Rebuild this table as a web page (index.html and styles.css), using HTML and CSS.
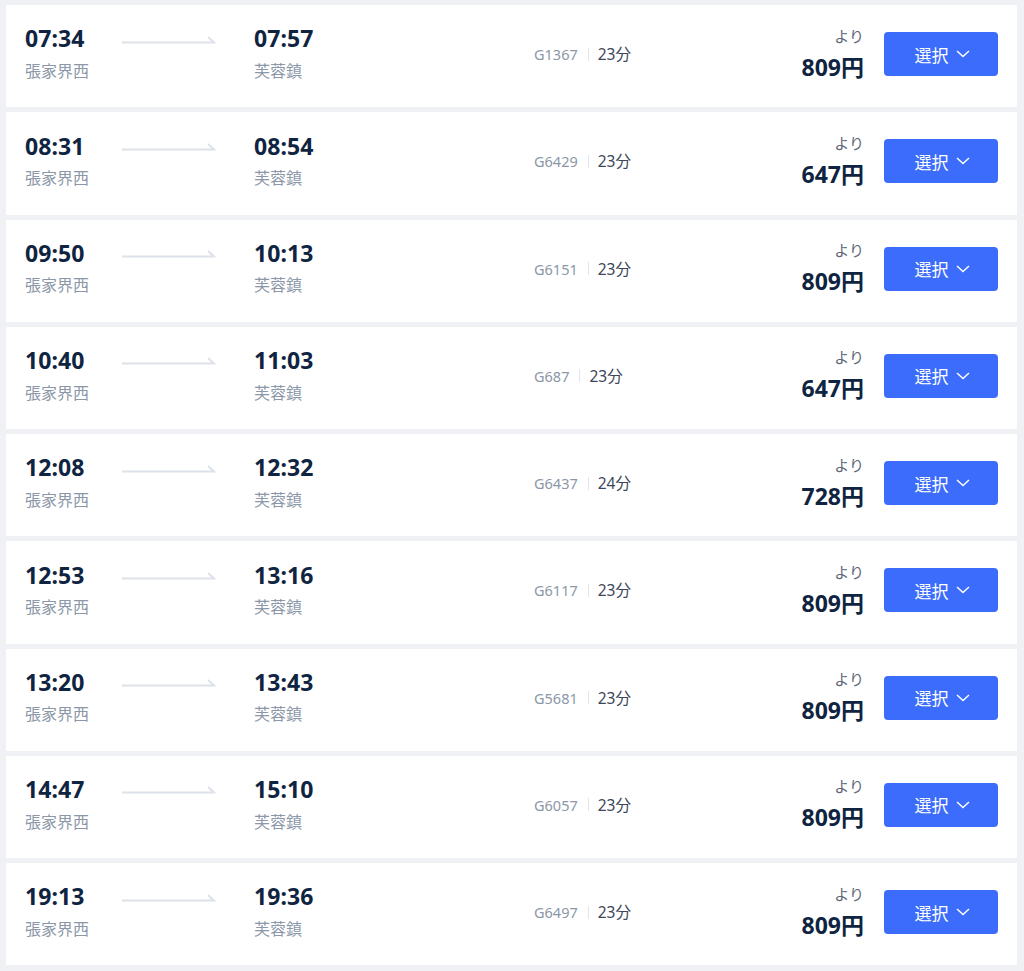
FILE: index.html
```html
<!DOCTYPE html>
<html lang="ja">
<head>
<meta charset="utf-8">
<link rel="stylesheet" href="styles.css">
</head>
<body>
<div class="list">
  <div class="card">
    <div class="stop"><div class="time">07:34</div><div class="station">張家界西</div></div>
    <svg class="arrow" width="94" height="8" viewBox="0 0 94 8"><path d="M0 6.5H92L86 1" fill="none" stroke="#dde2ea" stroke-width="2"/></svg>
    <div class="stop arr"><div class="time">07:57</div><div class="station">芙蓉鎮</div></div>
    <div class="train"><span class="no">G1367</span><span class="sep"></span><span class="dur">23分</span></div>
    <div class="price"><div class="from">より</div><div class="amount">809円</div></div>
    <button class="select">選択<svg width="14" height="8" viewBox="0 0 14 8"><path d="M1 1l6 5.5L13 1" fill="none" stroke="#fff" stroke-width="1.5"/></svg></button>
  </div>
  <div class="card">
    <div class="stop"><div class="time">08:31</div><div class="station">張家界西</div></div>
    <svg class="arrow" width="94" height="8" viewBox="0 0 94 8"><path d="M0 6.5H92L86 1" fill="none" stroke="#dde2ea" stroke-width="2"/></svg>
    <div class="stop arr"><div class="time">08:54</div><div class="station">芙蓉鎮</div></div>
    <div class="train"><span class="no">G6429</span><span class="sep"></span><span class="dur">23分</span></div>
    <div class="price"><div class="from">より</div><div class="amount">647円</div></div>
    <button class="select">選択<svg width="14" height="8" viewBox="0 0 14 8"><path d="M1 1l6 5.5L13 1" fill="none" stroke="#fff" stroke-width="1.5"/></svg></button>
  </div>
  <div class="card">
    <div class="stop"><div class="time">09:50</div><div class="station">張家界西</div></div>
    <svg class="arrow" width="94" height="8" viewBox="0 0 94 8"><path d="M0 6.5H92L86 1" fill="none" stroke="#dde2ea" stroke-width="2"/></svg>
    <div class="stop arr"><div class="time">10:13</div><div class="station">芙蓉鎮</div></div>
    <div class="train"><span class="no">G6151</span><span class="sep"></span><span class="dur">23分</span></div>
    <div class="price"><div class="from">より</div><div class="amount">809円</div></div>
    <button class="select">選択<svg width="14" height="8" viewBox="0 0 14 8"><path d="M1 1l6 5.5L13 1" fill="none" stroke="#fff" stroke-width="1.5"/></svg></button>
  </div>
  <div class="card">
    <div class="stop"><div class="time">10:40</div><div class="station">張家界西</div></div>
    <svg class="arrow" width="94" height="8" viewBox="0 0 94 8"><path d="M0 6.5H92L86 1" fill="none" stroke="#dde2ea" stroke-width="2"/></svg>
    <div class="stop arr"><div class="time">11:03</div><div class="station">芙蓉鎮</div></div>
    <div class="train"><span class="no">G687</span><span class="sep"></span><span class="dur">23分</span></div>
    <div class="price"><div class="from">より</div><div class="amount">647円</div></div>
    <button class="select">選択<svg width="14" height="8" viewBox="0 0 14 8"><path d="M1 1l6 5.5L13 1" fill="none" stroke="#fff" stroke-width="1.5"/></svg></button>
  </div>
  <div class="card">
    <div class="stop"><div class="time">12:08</div><div class="station">張家界西</div></div>
    <svg class="arrow" width="94" height="8" viewBox="0 0 94 8"><path d="M0 6.5H92L86 1" fill="none" stroke="#dde2ea" stroke-width="2"/></svg>
    <div class="stop arr"><div class="time">12:32</div><div class="station">芙蓉鎮</div></div>
    <div class="train"><span class="no">G6437</span><span class="sep"></span><span class="dur">24分</span></div>
    <div class="price"><div class="from">より</div><div class="amount">728円</div></div>
    <button class="select">選択<svg width="14" height="8" viewBox="0 0 14 8"><path d="M1 1l6 5.5L13 1" fill="none" stroke="#fff" stroke-width="1.5"/></svg></button>
  </div>
  <div class="card">
    <div class="stop"><div class="time">12:53</div><div class="station">張家界西</div></div>
    <svg class="arrow" width="94" height="8" viewBox="0 0 94 8"><path d="M0 6.5H92L86 1" fill="none" stroke="#dde2ea" stroke-width="2"/></svg>
    <div class="stop arr"><div class="time">13:16</div><div class="station">芙蓉鎮</div></div>
    <div class="train"><span class="no">G6117</span><span class="sep"></span><span class="dur">23分</span></div>
    <div class="price"><div class="from">より</div><div class="amount">809円</div></div>
    <button class="select">選択<svg width="14" height="8" viewBox="0 0 14 8"><path d="M1 1l6 5.5L13 1" fill="none" stroke="#fff" stroke-width="1.5"/></svg></button>
  </div>
  <div class="card">
    <div class="stop"><div class="time">13:20</div><div class="station">張家界西</div></div>
    <svg class="arrow" width="94" height="8" viewBox="0 0 94 8"><path d="M0 6.5H92L86 1" fill="none" stroke="#dde2ea" stroke-width="2"/></svg>
    <div class="stop arr"><div class="time">13:43</div><div class="station">芙蓉鎮</div></div>
    <div class="train"><span class="no">G5681</span><span class="sep"></span><span class="dur">23分</span></div>
    <div class="price"><div class="from">より</div><div class="amount">809円</div></div>
    <button class="select">選択<svg width="14" height="8" viewBox="0 0 14 8"><path d="M1 1l6 5.5L13 1" fill="none" stroke="#fff" stroke-width="1.5"/></svg></button>
  </div>
  <div class="card">
    <div class="stop"><div class="time">14:47</div><div class="station">張家界西</div></div>
    <svg class="arrow" width="94" height="8" viewBox="0 0 94 8"><path d="M0 6.5H92L86 1" fill="none" stroke="#dde2ea" stroke-width="2"/></svg>
    <div class="stop arr"><div class="time">15:10</div><div class="station">芙蓉鎮</div></div>
    <div class="train"><span class="no">G6057</span><span class="sep"></span><span class="dur">23分</span></div>
    <div class="price"><div class="from">より</div><div class="amount">809円</div></div>
    <button class="select">選択<svg width="14" height="8" viewBox="0 0 14 8"><path d="M1 1l6 5.5L13 1" fill="none" stroke="#fff" stroke-width="1.5"/></svg></button>
  </div>
  <div class="card">
    <div class="stop"><div class="time">19:13</div><div class="station">張家界西</div></div>
    <svg class="arrow" width="94" height="8" viewBox="0 0 94 8"><path d="M0 6.5H92L86 1" fill="none" stroke="#dde2ea" stroke-width="2"/></svg>
    <div class="stop arr"><div class="time">19:36</div><div class="station">芙蓉鎮</div></div>
    <div class="train"><span class="no">G6497</span><span class="sep"></span><span class="dur">23分</span></div>
    <div class="price"><div class="from">より</div><div class="amount">809円</div></div>
    <button class="select">選択<svg width="14" height="8" viewBox="0 0 14 8"><path d="M1 1l6 5.5L13 1" fill="none" stroke="#fff" stroke-width="1.5"/></svg></button>
  </div>
</div>
</body>
</html>
```

FILE: styles.css
```css
html, body {
  margin: 0;
  padding: 0;
  background: #f0f1f5;
}
body {
  font-family: "Noto Sans", "Noto Sans CJK JP", sans-serif;
  color: #0f2441;
}
.list {
  display: flex;
  flex-direction: column;
  gap: 5px;
  padding: 5px 7px 0 6px;
}
.card {
  height: 102.25px;
  background: #fff;
  display: flex;
  align-items: center;
  padding: 0 19px 4px 19px;
  box-sizing: border-box;
}
.stop {
  width: 97px;
  display: flex;
  flex-direction: column;
  margin-top: -2px;
}
.stop.arr {
  width: 280px;
  margin-left: 38px;
}
.time {
  font-size: 23px;
  font-weight: 700;
  line-height: 28px;
  letter-spacing: 0.1px;
  color: #0f2441;
}
.station {
  font-size: 16px;
  line-height: 22px;
  margin-top: 7.5px;
  color: #8c97a8;
}
.arrow {
  display: block;
  margin-top: -29px;
}
.train {
  flex: 1;
  display: flex;
  align-items: center;
  line-height: 20px;
}
.no {
  font-size: 14.5px;
  color: #8c97a8;
}
.sep {
  width: 1px;
  height: 13px;
  background: #e1e5eb;
  margin: 0 9px 0 10px;
}
.dur {
  font-size: 15.5px;
  color: #3c4759;
}
.price {
  display: flex;
  flex-direction: column;
  align-items: flex-end;
  margin-top: -2px;
}
.from {
  font-size: 15px;
  line-height: 22px;
  color: #5d6878;
}
.amount {
  font-size: 23px;
  font-weight: 700;
  line-height: 30px;
  margin-top: 5px;
  color: #0f2441;
}
.select {
  margin-left: 20px;
  width: 114px;
  height: 44px;
  border: none;
  border-radius: 4px;
  background: #3b6cfb;
  color: #fff;
  font-family: "Noto Sans CJK JP", "Noto Sans", sans-serif;
  font-size: 17px;
  display: flex;
  align-items: center;
  justify-content: center;
  gap: 7px;
  padding: 0 0 0 2px;
}
```
